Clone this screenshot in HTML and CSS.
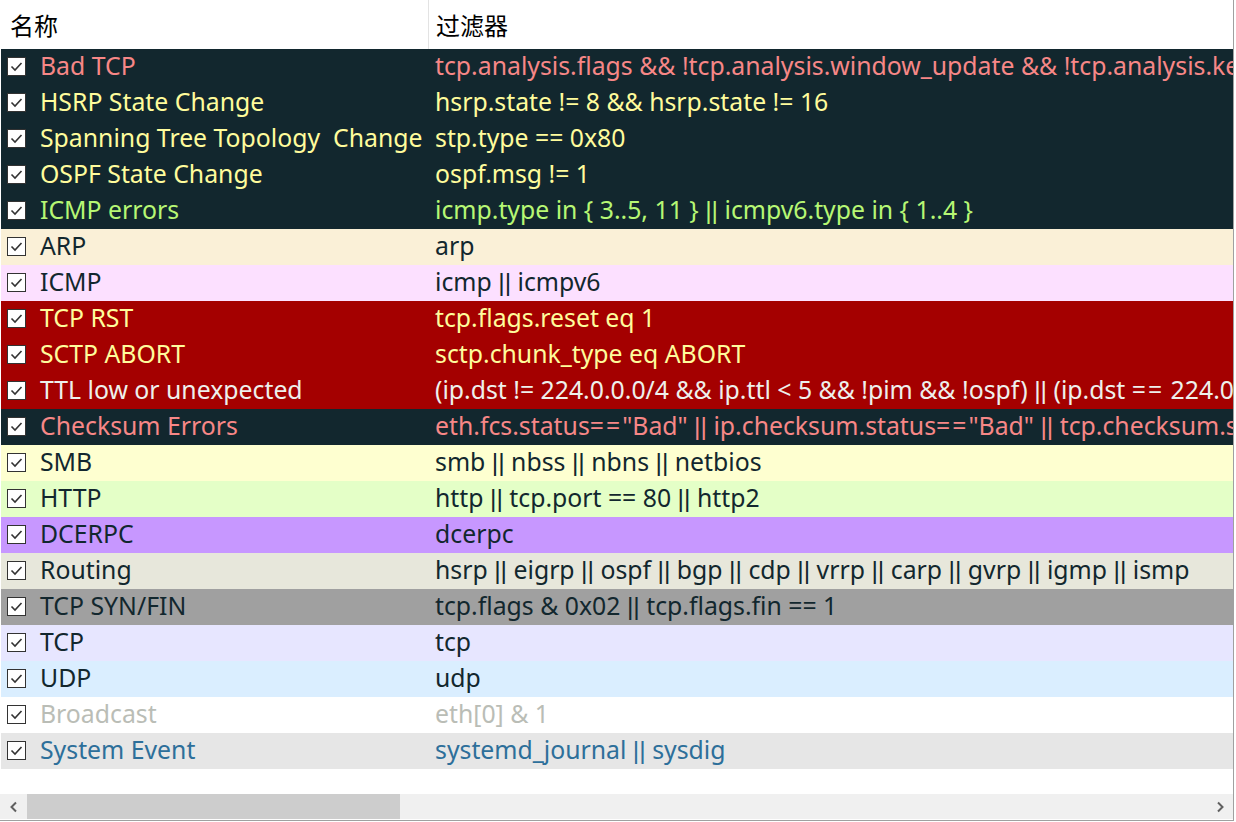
FILE: index.html
```html
<!DOCTYPE html>
<html lang="zh-CN">
<head>
    <meta charset="UTF-8">
    <title>着色规则</title>
    <link rel="stylesheet" href="styles.css">
</head>
<body>
    <div class="frame">
        <div class="header">
            <div class="col-name">名称</div>
            <div class="col-filter">过滤器</div>
        </div>

        <div class="rules">
            <div class="rule dark red"><div class="name"><span class="box"></span>Bad TCP</div><div class="filter">tcp.analysis.flags &amp;&amp; !tcp.analysis.window_update &amp;&amp; !tcp.analysis.keep_alive &amp;&amp; !tcp.analysis.keep_alive_ack</div></div>
            <div class="rule dark yellow"><div class="name"><span class="box"></span>HSRP State Change</div><div class="filter">hsrp.state != 8 &amp;&amp; hsrp.state != 16</div></div>
            <div class="rule dark yellow"><div class="name"><span class="box"></span>Spanning Tree Topology&nbsp; Change</div><div class="filter">stp.type == 0x80</div></div>
            <div class="rule dark yellow"><div class="name"><span class="box"></span>OSPF State Change</div><div class="filter">ospf.msg != 1</div></div>
            <div class="rule dark green"><div class="name"><span class="box"></span>ICMP errors</div><div class="filter">icmp.type in { 3..5, 11 } <span class="or">||</span> icmpv6.type in { 1..4 }</div></div>
            <div class="rule arp"><div class="name"><span class="box"></span>ARP</div><div class="filter">arp</div></div>
            <div class="rule icmp"><div class="name"><span class="box"></span>ICMP</div><div class="filter">icmp <span class="or">||</span> icmpv6</div></div>
            <div class="rule alert yellow"><div class="name"><span class="box"></span>TCP RST</div><div class="filter">tcp.flags.reset eq 1</div></div>
            <div class="rule alert yellow"><div class="name"><span class="box"></span>SCTP ABORT</div><div class="filter">sctp.chunk_type eq ABORT</div></div>
            <div class="rule alert white"><div class="name"><span class="box"></span>TTL low or unexpected</div><div class="filter">(ip.dst != 224.0.0.0/4 &amp;&amp; ip.ttl &lt; 5 &amp;&amp; !pim &amp;&amp; !ospf) <span class="or">||</span> (ip.dst <span class="eq">==</span> 224.0.0.0/24 &amp;&amp; ip.dst != 224.0.0.251 &amp;&amp; ip.ttl != 1 &amp;&amp; !(vrrp <span class="or">||</span> carp))</div></div>
            <div class="rule dark red"><div class="name"><span class="box"></span>Checksum Errors</div><div class="filter">eth.fcs.status<span class="eq">==</span>"Bad" <span class="or">||</span> ip.checksum.status<span class="eq">==</span>"Bad" <span class="or">||</span> tcp.checksum.status<span class="eq">==</span>"Bad" <span class="or">||</span> udp.checksum.status<span class="eq">==</span>"Bad"</div></div>
            <div class="rule smb"><div class="name"><span class="box"></span>SMB</div><div class="filter">smb <span class="or">||</span> nbss <span class="or">||</span> nbns <span class="or">||</span> netbios</div></div>
            <div class="rule http"><div class="name"><span class="box"></span>HTTP</div><div class="filter">http <span class="or">||</span> tcp.port == 80 <span class="or">||</span> http2</div></div>
            <div class="rule dcerpc"><div class="name"><span class="box"></span>DCERPC</div><div class="filter">dcerpc</div></div>
            <div class="rule routing"><div class="name"><span class="box"></span>Routing</div><div class="filter">hsrp <span class="or">||</span> eigrp <span class="or">||</span> ospf <span class="or">||</span> bgp <span class="or">||</span> cdp <span class="or">||</span> vrrp <span class="or">||</span> carp <span class="or">||</span> gvrp <span class="or">||</span> igmp <span class="or">||</span> ismp</div></div>
            <div class="rule synfin"><div class="name"><span class="box"></span>TCP SYN/FIN</div><div class="filter">tcp.flags &amp; 0x02 <span class="or">||</span> tcp.flags.fin == 1</div></div>
            <div class="rule tcp"><div class="name"><span class="box"></span>TCP</div><div class="filter">tcp</div></div>
            <div class="rule udp"><div class="name"><span class="box"></span>UDP</div><div class="filter">udp</div></div>
            <div class="rule broadcast"><div class="name"><span class="box"></span>Broadcast</div><div class="filter">eth[0] &amp; 1</div></div>
            <div class="rule sysevent"><div class="name"><span class="box"></span>System Event</div><div class="filter">systemd_journal <span class="or">||</span> sysdig</div></div>
        </div>

        <div class="hscroll">
            <div class="arrow">
                <svg width="12" height="12" viewBox="0 0 12 12"><path d="M8 1.5 L3.5 6 L8 10.5" fill="none" stroke="#606060" stroke-width="2"/></svg>
            </div>
            <div class="track"><div class="thumb"></div></div>
            <div class="arrow">
                <svg width="12" height="12" viewBox="0 0 12 12"><path d="M4 1.5 L8.5 6 L4 10.5" fill="none" stroke="#606060" stroke-width="2"/></svg>
            </div>
        </div>
    </div>
</body>
</html>
```

FILE: styles.css
```css
body {
    margin: 0;
    background: #fff;
    font-family: "Noto Sans", "Noto Sans CJK SC", sans-serif;
    font-size: 24.8px;
    color: #12272e;
}
.frame {
    width: 1233px;
    height: 820px;
    border-right: 1px solid #a0a0a0;
    border-bottom: 1px solid #a0a0a0;
    display: flex;
    flex-direction: column;
}
.header {
    display: flex;
    height: 49px;
    color: #000;
    font-family: "Noto Sans CJK SC", sans-serif;
    font-size: 24px;
}
.header .col-name {
    width: 418px;
    padding-left: 10px;
    line-height: 49px;
    border-right: 1px solid #e3e3e3;
}
.header .col-filter {
    padding-left: 7px;
    line-height: 49px;
}
.rules {
    margin-left: 1px;
    flex: 1;
}
.rule {
    display: flex;
    height: 36px;
    line-height: 32px;
    white-space: nowrap;
}
.rule .name {
    width: 427px;
    flex-shrink: 0;
    display: flex;
    align-items: flex-start;
    overflow: hidden;
}
.rule .filter {
    padding-left: 7px;
    overflow: hidden;
    flex: 1;
}
/* Noto's pipe is much wider than the original UI font */
.or {
    font-family: "Liberation Sans", sans-serif;
}
.eq {
    letter-spacing: 2px;
}
.box {
    width: 17px;
    height: 17px;
    margin: 8px 14px 0 6px;
    border: 1px solid #333;
    background: #fff url("data:image/svg+xml,%3Csvg xmlns='http://www.w3.org/2000/svg' width='17' height='17'%3E%3Cpath d='M3.5 8.5 L7 12 L13.5 5' fill='none' stroke='%23333' stroke-width='1.6'/%3E%3C/svg%3E") no-repeat center;
    flex-shrink: 0;
}

/* rule colours */
.dark { background: #12272e; }
.alert { background: #a40000; }
.red { color: #f78787; }
.yellow { color: #fffc9c; }
.green { color: #b7f774; }
.white { color: #eef0ec; }
.arp { background: #faf0d7; }
.icmp { background: #fce0ff; }
.smb { background: #feffd0; }
.http { background: #e4ffc7; }
.dcerpc { background: #c797ff; }
.routing { background: #e7e7db; }
.synfin { background: #a0a0a0; }
.tcp { background: #e7e6ff; }
.udp { background: #daeeff; }
.broadcast { color: #babdb6; }
.sysevent { background: #e6e6e6; color: #2d6f9a; }

.hscroll {
    display: flex;
    height: 25px;
    margin-bottom: 1px;
    background: #f0f0f0;
}
.hscroll .arrow {
    width: 27px;
    display: flex;
    align-items: center;
    justify-content: center;
}
.hscroll .track {
    flex: 1;
    display: flex;
}
.hscroll .thumb {
    width: 373px;
    background: #cdcdcd;
}
```
